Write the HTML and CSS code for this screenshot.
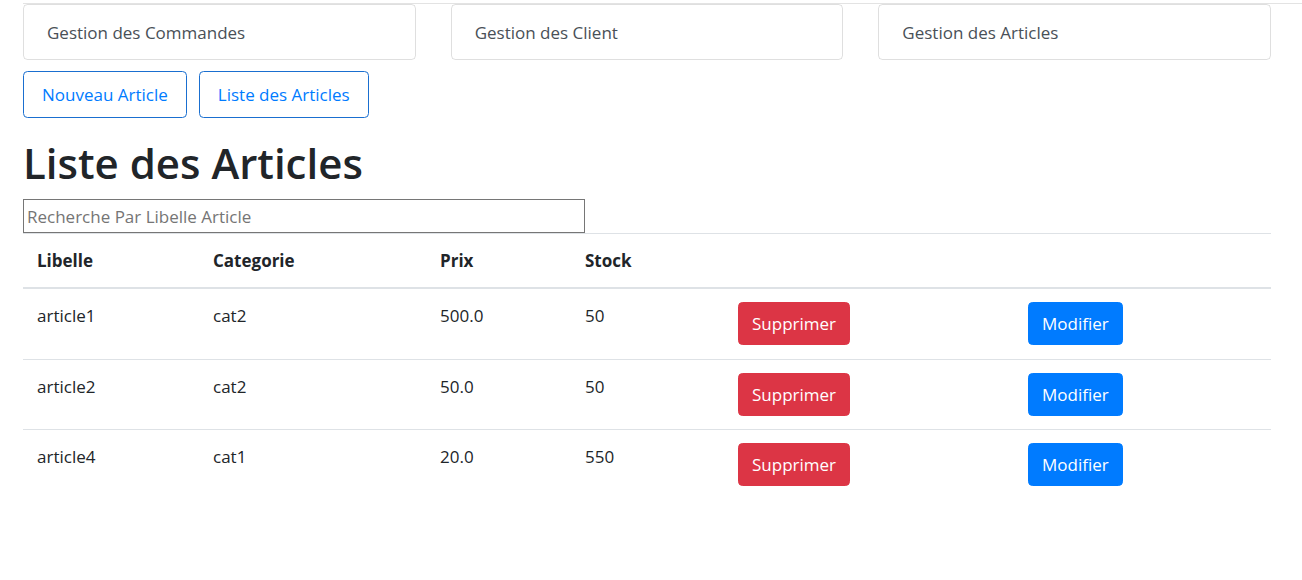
FILE: index.html
```html
<!DOCTYPE html>
<html lang="fr">
<head>
<meta charset="utf-8">
<title>Liste des Articles</title>
<link rel="stylesheet" href="styles.css">
</head>
<body>
<div class="topline"></div>
<div class="page">
  <div class="cards">
    <div class="card">Gestion des Commandes</div>
    <div class="card">Gestion des Client</div>
    <div class="card">Gestion des Articles</div>
  </div>
  <div class="actions">
    <button class="btn-outline">Nouveau Article</button>
    <button class="btn-outline">Liste des Articles</button>
  </div>
  <h1 class="title">Liste des Articles</h1>
  <input class="search" type="text" placeholder="Recherche Par Libelle Article">
  <table class="table">
    <thead>
      <tr>
        <th class="c1">Libelle</th>
        <th class="c2">Categorie</th>
        <th class="c3">Prix</th>
        <th class="c4">Stock</th>
        <th class="c5"></th>
        <th class="c6"></th>
      </tr>
    </thead>
    <tbody>
      <tr>
        <td>article1</td><td>cat2</td><td>500.0</td><td>50</td>
        <td><button class="btn btn-danger">Supprimer</button></td>
        <td><button class="btn btn-primary">Modifier</button></td>
      </tr>
      <tr>
        <td>article2</td><td>cat2</td><td>50.0</td><td>50</td>
        <td><button class="btn btn-danger">Supprimer</button></td>
        <td><button class="btn btn-primary">Modifier</button></td>
      </tr>
      <tr>
        <td>article4</td><td>cat1</td><td>20.0</td><td>550</td>
        <td><button class="btn btn-danger">Supprimer</button></td>
        <td><button class="btn btn-primary">Modifier</button></td>
      </tr>
    </tbody>
  </table>
</div>
</body>
</html>
```
FILE: styles.css
```css
* { box-sizing: border-box; }
body {
  margin: 0;
  font-family: "Open Sans", "Noto Sans", sans-serif;
  font-size: 17px;
  color: #212529;
  background: #fff;
}
.topline {
  margin-left: 23px;
  height: 4px;
  border-bottom: 1px solid #e3e3e3;
}
.page {
  padding: 0 31px 0 23px;
}
.cards {
  display: grid;
  grid-template-columns: repeat(3, 1fr);
  gap: 35px;
}
.card {
  height: 56px;
  border: 1px solid rgba(0,0,0,.125);
  border-radius: 4.5px;
  padding: 0 23px;
  display: flex;
  align-items: center;
  color: #495057;
  font-size: 17px;
}
.actions {
  display: flex;
  gap: 12px;
  margin-top: 11px;
}
.btn-outline {
  height: 47px;
  padding: 0 18px;
  border: 1px solid #1a6fd0;
  border-radius: 4.5px;
  background: #fff;
  color: #007bff;
  font-family: inherit;
  font-size: 17px;
}
.title {
  margin: 18px 0 9px;
  font-size: 42px;
  font-weight: 600;
  line-height: 54px;
  color: #212529;
}
.search {
  display: block;
  width: 562px;
  height: 34px;
  border: 1px solid #767676;
  border-radius: 0;
  padding: 0 3px;
  font-family: inherit;
  font-size: 17px;
  color: #212529;
  margin: 0;
}
.search::placeholder { color: #757575; }
.table {
  width: 100%;
  border-collapse: collapse;
  table-layout: fixed;
}
.table th, .table td {
  text-align: left;
  vertical-align: top;
  padding: 13px 14px 13.5px;
  line-height: 27px;
  border-top: 1px solid #dee2e6;
}
.table th {
  font-weight: 700;
  border-bottom: 2px solid #dee2e6;
  padding: 13px 14px;
}
.c1 { width: 176px; }
.c2 { width: 227px; }
.c3 { width: 145px; }
.c4 { width: 153px; }
.c5 { width: 290px; }
.c6 { width: 257px; }
.btn {
  height: 43px;
  padding: 0 13px;
  border: 1px solid transparent;
  border-radius: 4.5px;
  color: #fff;
  font-family: inherit;
  font-size: 17px;
}
.btn-danger { background: #dc3545; border-color: #dc3545; }
.btn-primary { background: #007bff; border-color: #007bff; }
```
